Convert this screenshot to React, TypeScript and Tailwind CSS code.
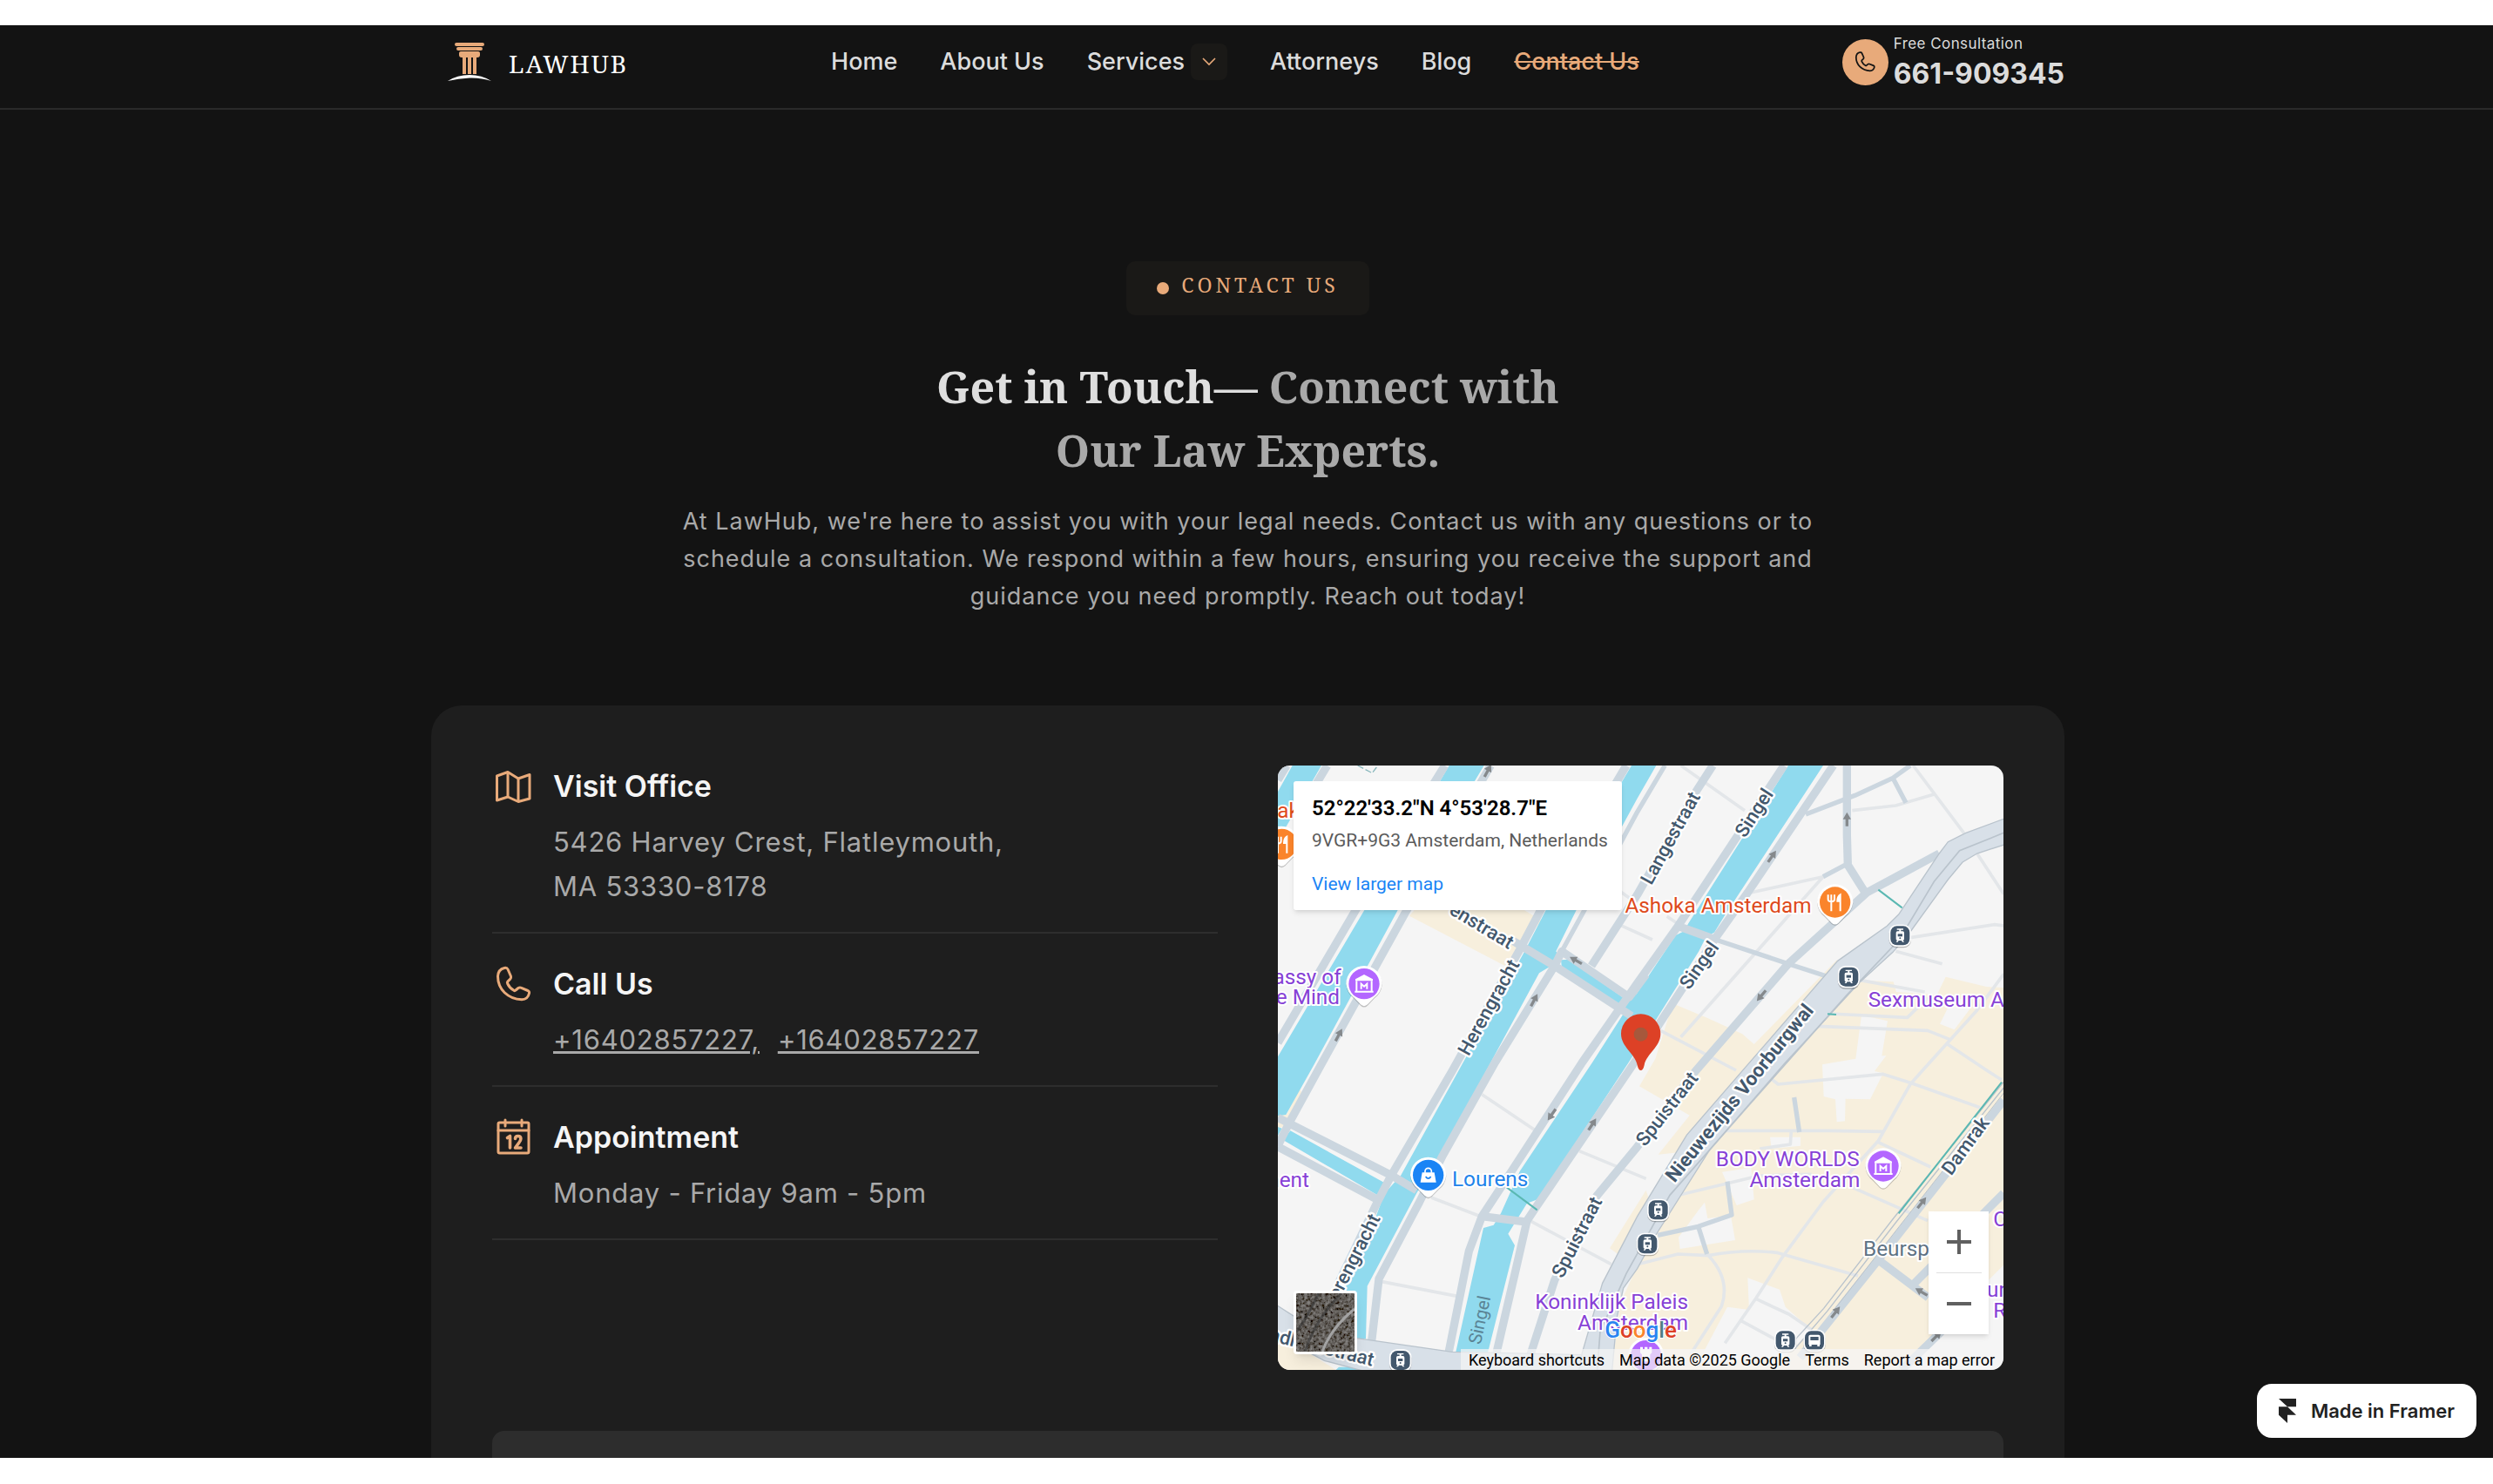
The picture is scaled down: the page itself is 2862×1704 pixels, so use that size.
import type { ReactNode } from "react";

const serif = "font-['Noto_Serif','DejaVu_Serif_Condensed','DejaVu_Serif',serif]";

function Logo() {
  return (
    <a href="#home" className="flex items-center gap-[20px] pl-[19px]">
      <svg viewBox="0 0 50 44" className="h-[44px] w-[50px]">
        <g fill="#e8aa7a">
          <rect x="8" y="0" width="34" height="4" rx="2" />
          <rect x="10" y="5" width="30" height="4" rx="2" />
          <path d="M13 12q0-2 2-2h20q2 0 2 2v2q0 3-3 3H16q-3 0-3-3z" />
          <path d="M17 16h4v20h-4zM23 16h4v20h-4zM29 16h4v20h-4z" />
        </g>
        <path d="M0 44Q11 37 25 37T50 44Q38 40 25 40.500T0 44z" fill="#fff" />
      </svg>
      <span className={`pt-1 text-[28px] leading-[30px] tracking-[2px] text-white ${serif}`}>
        LAWHUB
      </span>
    </a>
  );
}

function PhoneIcon({ className }: { className: string }) {
  return (
    <svg viewBox="0 0 48 48" className={className} fill="none" stroke="currentColor" strokeWidth="3" strokeLinejoin="round">
      <path d="M14 5.500Q17 4.800 18 7L21.500 15Q22 17 20.800 18.200L18 20.800Q17 22 17.700 23.500 20 28.500 25 31.300 26 32 27 31L30 28.500Q31.500 27.500 33 28.200L41 31.500Q43 32.500 42.500 34.500 41 41.500 34 41.800C18 41 6.500 30 6.500 15Q7 7 14 5.500z" />
    </svg>
  );
}

function Header() {
  return (
    <header className="border-b-2 border-[#2a2a2a] pl-[3px]">
      <div className="mx-auto flex h-[95px] max-w-[1875px] items-center justify-between pb-[11px]">
        <Logo />
        <nav className="flex items-center gap-[49px] text-[27px] font-medium text-[#dcdcdc]">
          <a href="#home">Home</a>
          <a href="#about">About Us</a>
          <div className="flex items-center gap-[7px]">
            <a href="#services">Services</a>
            <button
              aria-label="Show services"
              className="flex h-[42px] w-[42px] items-center justify-center rounded-lg bg-[#1a1917]"
            >
              <svg viewBox="0 0 16 10" className="h-[10px] w-[16px]" fill="none" stroke="#e8aa7a" strokeWidth="1.6">
                <path d="M1 1l7 7 7-7" />
              </svg>
            </button>
          </div>
          <a href="#attorneys">Attorneys</a>
          <a href="#blog">Blog</a>
          <a href="#contact" className="text-[#e8aa7a] line-through">
            Contact Us
          </a>
        </nav>
        <a href="tel:661909345" className="flex items-center gap-[6px] text-[#dcdcdc]">
          <span className="flex h-[53px] w-[53px] items-center justify-center rounded-full bg-[#e8aa7a]">
            <PhoneIcon className="h-[28px] w-[28px] text-[#131313]" />
          </span>
          <span className="flex flex-col gap-[5px]">
            <span className="text-[17px] leading-[22px] tracking-wide">Free Consultation</span>
            <span className="text-[32px] font-bold leading-[38px] tracking-[0px]">661-909345</span>
          </span>
        </a>
      </div>
    </header>
  );
}

function Hero() {
  return (
    <section className="flex flex-col items-center pt-[174px] text-center">
      <div className="flex h-[62px] items-center gap-[14px] rounded-[10px] bg-[#1a1917] px-[35px]">
        <span className="h-[14px] w-[14px] rounded-full bg-[#e8aa7a]" />
        <span className={`pb-2 text-[23px] leading-[30px] tracking-[4px] text-[#e8aa7a] ${serif}`}>
          CONTACT US
        </span>
      </div>
      <h1 className={`mt-[46px] text-[50px] font-bold leading-[73px] text-[#a9a9a9] ${serif}`}>
        <span className="text-[#dedede]">Get in Touch—</span> Connect with
        <br />
        Our Law Experts.
      </h1>
      <p className="mt-[23px] max-w-[1310px] text-[27px] leading-[43px] tracking-[1px] text-[#a9a9a9]">
        At LawHub, we're here to assist you with your legal needs. Contact us with any questions or to
        schedule a consultation. We respond within a few hours, ensuring you receive the support and
        guidance you need promptly. Reach out today!
      </p>
    </section>
  );
}

function MapIcon() {
  return (
    <svg viewBox="0 0 48 48" className="h-[48px] w-[48px]" fill="none" stroke="#e8aa7a" strokeWidth="3" strokeLinejoin="round">
      <path d="M5.500 12L18 7.500 30 15l13-4.500V38L30 41.500 18 36 5.500 40z" />
      <path d="M18 7.500V36M30 15v26.500" />
    </svg>
  );
}

function CalendarIcon() {
  return (
    <svg viewBox="0 0 48 48" className="h-[48px] w-[48px]" fill="none" stroke="#e8aa7a" strokeWidth="3" strokeLinecap="round" strokeLinejoin="round">
      <rect x="7" y="7" width="35" height="35" rx="1.500" />
      <path d="M7 16h35M15 4v7M34 4v7" />
      <path d="M17.500 24.500l3-2v13.500M26.500 25.500q0-3 3.200-3t3.200 3q0 2-2 4.500L26.500 36H33" strokeWidth="3.600" />
    </svg>
  );
}

function InfoRow({ icon, title, children }: { icon: ReactNode; title: string; children: ReactNode }) {
  return (
    <div className="flex gap-[22px] border-b-2 border-[#2e2e2e] pb-[27px] pt-[34px] first:pt-0">
      {icon}
      <div>
        <h2 className="text-[34px] font-semibold leading-[48px] text-[#f5f5f5]">{title}</h2>
        <div className="mt-[14px] text-[31px] leading-[51px] tracking-wide text-[#a9a9a9]">{children}</div>
      </div>
    </div>
  );
}

/* ---- Map ---- */

function Pin({ x, y, color, children }: { x: number; y: number; color: string; children?: ReactNode }) {
  return (
    <g transform={`translate(${x} ${y})`}>
      <path d="M-62 4A62 62 0 1 1 62 4Q58 34 36 50L12 75Q0 86-12 75L-36 50Q-58 34-62 4z" fill="#000" opacity=".22" />
      <path d="M-62 0A62 62 0 1 1 62 0Q58 30 36 46L12 71Q0 82-12 71L-36 46Q-58 30-62 0z" fill="#fff" />
      <circle r="53" fill={color} />
      {children}
    </g>
  );
}

function Museum() {
  return (
    <g fill="none" stroke="#fff" strokeWidth="6">
      <path d="M-26-10v35M26-10v35M-32 27h64" />
      <path d="M-30-10v-6L0-32l30 16v6z" fill="#fff" stroke="none" />
      <path d="M-10 18V0L0 9 10 0v18" />
    </g>
  );
}

function Fork() {
  return (
    <g fill="none" stroke="#fff" strokeWidth="6">
      <path d="M-24-26v16q0 7 11 8 11-1 11-8v-16M-13-26V31" />
      <path d="M18 31V-26Q8-20 8-4h10" fill="#fff" />
    </g>
  );
}

function Transit({ x, y, bus }: { x: number; y: number; bus?: boolean }) {
  return (
    <g transform={`translate(${x} ${y})`}>
      <rect x="-38" y="-34" width="76" height="76" rx="26" fill="#000" opacity=".25" />
      <rect x="-38" y="-38" width="76" height="76" rx="26" fill="#fff" />
      <rect x="-33" y="-33" width="66" height="66" rx="22" fill="#43586d" />
      {bus ? (
        <g>
          <path d="M-20-14q0-6 6-6h28q6 0 6 6v28h-40z" fill="#fff" />
          <path d="M-14-13h28V-1h-28z" fill="#43586d" />
          <path d="M-18 14h8v6h-8zM10 14h8v6h-8z" fill="#fff" />
        </g>
      ) : (
        <g>
          <path d="M-11-24h22v4H3v5h6q5 0 5 5v22q0 4-4 4l4 6H8l-3-5H-5l-3 5h-6l4-6q-4 0-4-4v-22q0-5 5-5h6v-5h-8z" fill="#fff" />
          <path d="M-8-6H8V3H-8z" fill="#43586d" />
          <circle cy="9" r="3" fill="#43586d" />
        </g>
      )}
    </g>
  );
}

// x, y, heading in degrees
const arrows = [
  [723, 18, 28],
  [210, 928, 28],
  [883, 808, 28],
  [1026, 671, -60],
  [1960, 185, 0],
  [1702, 313, 35],
  [1665, 793, 220],
  [943, 1203, 215],
  [1083, 1236, 33],
  [2218, 1506, 38],
  [1921, 1883, 38],
  [2268, 1966, 45],
  [2216, 1813, -60],
];

// x, y, rotation, text
const streets: [number, number, number, string][] = [
  [1640, 163, -57, "Singel"],
  [1451, 688, -55, "Singel"],
  [1352, 250, -61, "Langestraat"],
  [726, 833, -61, "Herengracht"],
  [702, 552, 31, "enstraat"],
  [252, 1712, -63, "Herengracht"],
  [1030, 1625, -63, "Spuistraat"],
  [1340, 1183, -52, "Spuistraat"],
  [2368, 1310, -54, "Damrak"],
  [114, 1994, 14, "Raadhuisstraat"],
];

function CityMap() {
  return (
    <svg
      viewBox="0 0 2499 2082"
      preserveAspectRatio="xMidYMid slice"
      className="h-full w-full bg-[#f5f5f5] font-['Roboto',sans-serif]"
    >
      {/* commercial areas */}
      <g fill="#f7efdd">
        <path d="M470 498H848L908 533 788 693 453 518z" />
        <path d="M1360 820L1480 870 1600 925 1640 960 1925 670 1960 760 1500 1240 1408 1330 1310 1340 1418 1205 1245 1105 1300 1010z" />
        <path d="M2008 740L2120 745 2130 780 2270 790 2300 728 2440 762 2500 765V1720L2430 1790 2290 1960 2150 2082H1150L1180 1850 1300 1590 1500 1300z" />
        <path d="M1143 1663L1268 1463 1290 1530 1180 1690z" />
        <path d="M0 1955L200 2082H0zM0 1195l30 8 45-90 10 20-60 110-25 6z" />
      </g>
      <g fill="#f5f5f5">
        <path d="M2010 860L2100 880 2080 1000 2095 1000 2055 1053 2085 1060 2040 1150 1955 1148 1953 1225 1925 1228 1920 1150 1880 1140 1875 1030 1990 1010z" />
        <path d="M1695 1280h105v30l-100 10zM1530 1400l100-15 10 110-60 20z" />
        <path d="M1450 1530l20-25 10 55 80-10 15 85-190 30-5-40z" />
        <path d="M1618 1765l110 40 20 60 90 80-90 90-300 20 100-190 75 10z" />
        <path d="M2330 790l60 40-60 80-50-20z" />
      </g>

      {/* canals */}
      <g fill="#90daee">
        <path d="M50 0H150L0 260V90z" />
        <path d="M590 0H710L413 498 125 1030 28 1203 0 1207V1003L298 498z" />
        <path d="M0 1245l14 5-14 25zM18 1290L43 1258 368 1438 348 1483z" />
        <path d="M1218 0H1303L1238 113 1028 498 958 640 975 670 900 715 733 1023 558 1343 478 1473 308 1793 303 1975H150L235 1793 305 1640 368 1473 423 1413 638 1023 850 640 923 498z" />
        <path d="M975 670L1000 668 1190 800 1240 760 1220 860 1165 826 978 698z" />
        <path d="M1758 0H1878L1538 518 1503 575 1475 590 1450 640 1300 880 1208 1023 898 1493 858 1508 793 1613 816 1653 723 2023 613 2020 708 1593 743 1583 768 1543 833 1398 1083 1023 1200 840 1370 585 1400 570 1413 545z" />
        <path d="M210 2072h120v10H200z" />
      </g>

      {/* lanes */}
      <g fill="none" stroke="#e3e6e9" strokeWidth="11" strokeLinejoin="round">
        <path d="M703 1133L888 1258M1038 1328L1268 1423M528 1488L698 1553M358 1778L618 1828M868 1568L1148 1718" />
        <path d="M1388 0L1608 155M1628 438L1878 383 1388 935M1978 155L2128 138 2263 98M2188 0L2363 233M2408 303L2500 443" />
        <path d="M2178 593L2468 548 2500 552M2128 640L2288 683M2008 740L2228 780M1318 913L1578 1050M1900 855L2168 868 2238 800M1858 898L2238 913 2313 943" />
        <path d="M2500 718L2408 843 2218 1053 2178 1098 2068 1293 1878 1503 1738 1693 1648 1833 1540 1990M2303 958L2438 1048 2493 1083" />
        <path d="M1698 1078L1723 1098 2083 1063 2178 1093 2418 1178M1528 1258H1900L2083 1261M2068 1298L2248 1383M1978 1453L2238 1568" />
        <path d="M1368 1483L1658 1413 1838 1408M1660 1320L1765 1305 1768 1260M1238 1718L1378 1683 1483 1688Q1600 1665 1718 1678L1998 1758M1483 1688Q1560 1770 1528 1863L1420 2030" />
        <path d="M1648 1838L1760 1890 1838 1943M1590 1910L1720 1980M1180 550L1290 600M1160 420l70 50M1340 520l60 40" />
      </g>

      {/* streets */}
      <g fill="none" stroke="#cbd6df" strokeWidth="28" strokeLinejoin="round">
        <path d="M30 0L0 50M170 0L125 75M575 0L268 498 0 955M733 0L440 505 153 1023 38 1233 0 1310" />
        <path d="M1200 0L905 498 830 640 600 1053 390 1413 343 1503 210 1780 180 1880M953 690L748 1023 568 1343 488 1503 348 1768 323 1983" />
        <path d="M808 603L953 690 1218 863M953 690L978 640 1210 798 1268 720M1498 0L1440 90 1238 445 1080 690" />
        <path d="M0 1213L393 1413 478 1463M0 1313L348 1498" />
        <path d="M1743 0L1378 553 1238 750 1048 1023 808 1393 703 1553 658 1673 588 2023M1913 0L1618 438 1508 593 1318 883 1228 1023 888 1523 858 1568 818 1743 753 2023M1378 553L1508 600M703 1553L863 1573" />
        <path d="M2278 303L2028 438 1758 683 1438 1053 1238 1313 1098 1483 953 1773 860 2060M1960 0V240L1963 343 2023 438" />
        <path d="M2500 1153L2068 1703 1798 2040M2500 1473L2183 1793M2068 1703L2240 1833M2290 1945L2148 2082" />
      </g>
      <g fill="none" stroke="#cbd6df" strokeWidth="16" strokeLinejoin="round">
        <path d="M1333 0L1238 160 1053 503 978 640M1508 600L1758 683 1888 725M2178 0L2118 43 1988 103 1818 168M2118 43L2163 128M1878 383L1953 343" />
        <path d="M1548 1433L1563 1548 1448 1588 1308 1618M1448 1588L1478 1683M1778 1143L1796 1263" />
      </g>

      {/* main roads */}
      <g fill="#d8e0e8" stroke="#b9c3cc" strokeWidth="4">
        <path d="M-10 1855L60 1900 273 1973 600 2020 760 2023 1045 2030 1150 2040V2095H330L160 2050-10 1960z" />
        <path d="M2510 180L2368 233 2308 263 2278 303 2138 513 2098 553 1928 673 1610 1040 1408 1273 1238 1553 1118 1783 1048 2023 1035 2095H1150L1168 1900 1190 1800 1238 1733 1298 1623 1488 1323 1748 1023 2008 743 2118 643 2178 573 2308 393 2358 333 2408 303 2510 270z" />
      </g>
      <g fill="none" stroke="#b9c3cc" strokeWidth="5">
        <path d="M2500 232L2348 293 2260 400 2140 600 1960 790 1640 1150 1350 1480 1200 1750 1110 1950 1100 2082" />
        <path d="M2500 1090L2120 1560 1880 1870 1770 1990M2500 1110L2130 1572 1892 1880 1780 2010" strokeWidth="4" />
        <path d="M2500 1128L2140 1588 1904 1890" strokeWidth="3" />
      </g>
      <path d="M2493 1091L2138 1543M788 1453L893 1531M2068 428L2150 490M1893 856l30 2" fill="none" stroke="#5ab8b2" strokeWidth="6" />
      <path d="M275 0l50 26 15-20" fill="none" stroke="#8ab8bd" strokeWidth="4" strokeDasharray="22 8" />

      {arrows.map(([x, y, angle]) => (
        <path
          key={`${x}-${y}`}
          d="M0-24L14 0H5V24H-5V0H-14z"
          fill="#85898c"
          transform={`translate(${x} ${y}) rotate(${angle})`}
        />
      ))}

      {/* street names */}
      <g fill="#43586d" stroke="#fff" strokeWidth="14" strokeLinejoin="round" paintOrder="stroke" fontSize="66" fontWeight="500" textAnchor="middle">
        {streets.map(([x, y, angle, name]) => (
          <text key={`${x}-${y}`} transform={`translate(${x} ${y}) rotate(${angle})`} dy="22">
            {name}
          </text>
        ))}
        <text transform="translate(1590 1128) rotate(-51)" dy="22" fontWeight="700" fontSize="67">
          Nieuwezijds Voorburgwal
        </text>
        <text transform="translate(696 1910) rotate(-78)" dy="20" fontWeight="400" fontSize="62" fill="#5b8495" stroke="none">
          Singel
        </text>
      </g>

      {/* places */}
      <g stroke="#fff" strokeWidth="12" strokeLinejoin="round" paintOrder="stroke" fontSize="73">
        <g fill="#8741d6">
          <text x="218" y="753" textAnchor="end">Embassy of</text>
          <text x="213" y="823" textAnchor="end">the Mind</text>
          <text x="108" y="1453" textAnchor="end">Monument</text>
          <text x="2033" y="830">Sexmuseum Amsterdam</text>
          <text x="2003" y="1380" textAnchor="end">BODY WORLDS</text>
          <text x="2005" y="1453" textAnchor="end">Amsterdam</text>
          <text x="1413" y="1873" textAnchor="end">Koninklijk Paleis</text>
          <text x="1413" y="1943" textAnchor="end">Amsterdam</text>
          <text x="2464" y="1588">C</text>
          <text x="2442" y="1831">un</text>
          <text x="2464" y="1903">R</text>
        </g>
        <g fill="#de4a1c">
          <text x="-2" y="180">ak</text>
          <text x="1838" y="508" textAnchor="end">Ashoka Amsterdam</text>
        </g>
        <text x="600" y="1448" fill="#2283ea">Lourens</text>
        <text x="2016" y="1688" fill="#5f7384">Beursplein</text>
      </g>

      <Pin x={13} y={271} color="#fa842b"><Fork /></Pin>
      <Pin x={1919} y={471} color="#fa842b"><Fork /></Pin>
      <Pin x={297} y={752} color="#b366ff"><Museum /></Pin>
      <Pin x={2085} y={1380} color="#b366ff"><Museum /></Pin>
      <Pin x={1268} y={2033} color="#b366ff">
        <path d="M-20-30h9v8h6v-8H5v8h6v-8h9v20l-6 6v24h-28V-4l-6-6z" fill="#fff" />
      </Pin>
      <Pin x={518} y={1411} color="#1a84f5">
        <path d="M-21-9h42l6 34h-54z" fill="#fff" />
        <path d="M-11-8v-5a11 11 0 0 1 22 0v5" fill="none" stroke="#fff" strokeWidth="5" />
        <path d="M-9 5q9 13 18 0" fill="none" stroke="#1a84f5" strokeWidth="5" />
      </Pin>

      <Transit x={2143} y={586} />
      <Transit x={1966} y={728} />
      <Transit x={1310} y={1531} />
      <Transit x={1273} y={1648} />
      <Transit x={1748} y={1981} />
      <Transit x={1848} y={1981} bus />
      <Transit x={422} y={2049} />

      <path d="M1250 1050q-8 0-12-18c-8-40-56-62-56-108a68 68 0 1 1 136 0c0 46-48 68-56 108q-4 18-12 18z" fill="#dd4126" />
      <circle cx="1250" cy="926" r="24" fill="#a6583c" />

      <text x="1126" y="1971" fontSize="78" fontWeight="500" stroke="#fff" strokeWidth="6" paintOrder="stroke">
        <tspan fill="#2a84f0">G</tspan>
        <tspan fill="#dd4126">o</tspan>
        <tspan fill="#fa842b">o</tspan>
        <tspan fill="#2a84f0">g</tspan>
        <tspan fill="#4e7f86">l</tspan>
        <tspan fill="#dd4126">e</tspan>
      </text>
    </svg>
  );
}

function SatelliteThumb() {
  return (
    <svg viewBox="0 0 67 67" className="h-full w-full">
      <filter id="roofs">
        <feTurbulence type="fractalNoise" baseFrequency="0.3" numOctaves="4" seed="4" />
        <feColorMatrix values="0.4 0 0 0 -0.08  0.4 0 0 0 -0.09  0.4 0 0 0 -0.1  0 0 0 0 1" />
      </filter>
      <rect width="67" height="67" filter="url(#roofs)" />
      <path d="M0 45Q14 25 26 0M10 67Q22 30 52 0" fill="none" stroke="#333" strokeWidth="3" opacity=".6" />
      <path d="M30 67Q40 40 67 18" fill="none" stroke="#a3a3a3" strokeWidth="3" />
    </svg>
  );
}

function MapPanel() {
  return (
    <div className="relative h-[694px] overflow-hidden rounded-[14px] font-['Roboto',sans-serif]">
      <CityMap />
      <div className="absolute left-[18px] top-[18px] h-[148px] rounded-[3px] bg-white pl-[21px] pr-[16px] pt-[17px] shadow-md">
        <p className="text-[24px] font-semibold leading-[28px] text-black">52°22'33.2"N 4°53'28.7"E</p>
        <p className="mt-[10px] text-[21px] leading-[26px] text-[#5b5b5b]">9VGR+9G3 Amsterdam, Netherlands</p>
        <a href="#map" className="mt-[24px] block text-[21px] leading-[26px] text-[#1a84f5]">
          View larger map
        </a>
      </div>
      <button
        aria-label="Satellite view"
        className="absolute bottom-[18px] left-[18px] h-[73px] w-[73px] overflow-hidden rounded-[4px] border-3 border-white shadow-lg"
      >
        <SatelliteThumb />
      </button>
      <div className="absolute bottom-[41px] right-[17px] flex w-[69px] flex-col items-center bg-white shadow-md">
        <button aria-label="Zoom in" className="flex h-[70px] w-full items-center justify-center">
          <svg viewBox="0 0 28 28" className="h-[28px] w-[28px]" stroke="#606060" strokeWidth="4">
            <path d="M0 14h28M14 0v28" />
          </svg>
        </button>
        <div className="h-px w-[52px] bg-[#e0e0e0]" />
        <button aria-label="Zoom out" className="flex h-[70px] w-full items-center justify-center">
          <svg viewBox="0 0 28 28" className="h-[28px] w-[28px]" stroke="#606060" strokeWidth="4">
            <path d="M0 14h28" />
          </svg>
        </button>
      </div>
      <div className="absolute bottom-0 right-0 flex h-[24px] items-center gap-[17px] whitespace-nowrap bg-[#f5f5f5]/70 pl-[9px] pr-[10px] pt-px text-[18px] text-black">
        <button>Keyboard shortcuts</button>
        <span>Map data ©2025 Google</span>
        <a href="#terms">Terms</a>
        <a href="#report">Report a map error</a>
      </div>
    </div>
  );
}

export default function App() {
  return (
    <div className="h-screen bg-white pb-[30px] pt-[29px] font-['Inter',sans-serif]">
      <div className="relative h-full overflow-hidden bg-[#131313]">
        <Header />
        <main className="pl-[3px]">
          <Hero />

          {/* Contact card */}
          <section className="mx-auto mt-[104px] max-w-[1875px] rounded-[35px] bg-[#1e1e1e] px-[70px] pb-[70px] pt-[69px]">
            <div className="grid grid-cols-2 gap-[69px]">
              <div>
                <InfoRow icon={<MapIcon />} title="Visit Office">
                  <p>
                    5426 Harvey Crest, Flatleymouth,
                    <br />
                    MA 53330-8178
                  </p>
                </InfoRow>
                <InfoRow icon={<PhoneIcon className="h-[48px] w-[48px] text-[#e8aa7a]" />} title="Call Us">
                  <p className="flex gap-[21px] underline">
                    <a href="tel:+16402857227">+16402857227,</a>
                    <a href="tel:+16402857227">+16402857227</a>
                  </p>
                </InfoRow>
                <InfoRow icon={<CalendarIcon />} title="Appointment">
                  <p>Monday - Friday 9am - 5pm</p>
                </InfoRow>
              </div>
              <MapPanel />
            </div>
            <div className="mt-[70px] h-[600px] rounded-[14px] bg-[#2d2d2d]" />
          </section>
        </main>

        <a
          href="#framer"
          className="absolute bottom-[23px] right-[19px] flex h-[62px] items-center gap-[17px] rounded-[17px] bg-white px-[25px] text-[#222]"
        >
          <svg viewBox="0 0 20 28" className="h-[28px] w-[20px]" fill="#222">
            <path d="M0 0h20v9.300H10zM0 9.300h10l10 9.400H10V28L0 18.700z" />
          </svg>
          <span className="text-[22px] font-semibold">Made in Framer</span>
        </a>
      </div>
    </div>
  );
}
